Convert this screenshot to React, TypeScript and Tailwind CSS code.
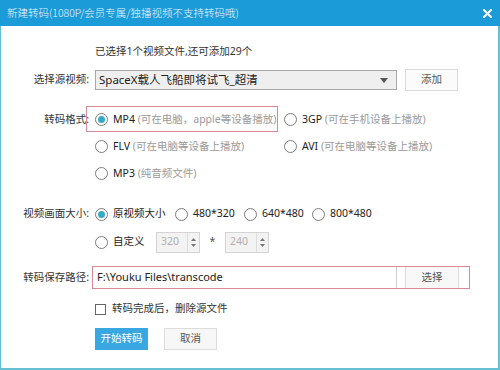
// App.tsx — 新建转码 dialog

const FONT = "font-['Noto_Sans','Noto_Sans_CJK_SC',sans-serif]";

// ── Radio ─────────────────────────────────────────────────────────────────────
function Radio({ checked }: { checked?: boolean }) {
  return (
    <span className="w-[13px] h-[13px] rounded-full border border-[#7d7d7d] bg-white flex items-center justify-center shrink-0">
      {checked && <span className="w-[7px] h-[7px] rounded-full bg-[#36a9c6]" />}
    </span>
  );
}

// ── RadioItem ─────────────────────────────────────────────────────────────────
interface RadioItemProps {
  label: string;
  note?: string;
  checked?: boolean;
}

function RadioItem({ label, note, checked }: RadioItemProps) {
  return (
    <div className="flex items-center gap-[5px] h-full">
      <Radio checked={checked} />
      <span className="text-[#222] whitespace-nowrap">
        {label}
        {note && <span className="text-[#9a9a9a]"> {note}</span>}
      </span>
    </div>
  );
}

// ── SpinBox ───────────────────────────────────────────────────────────────────
function SpinBox({ value }: { value: string }) {
  return (
    <div className="w-[44px] h-[21px] border border-[#d4d4d4] bg-[#f3f3f3] flex items-stretch">
      <div className="flex-1 flex items-center pl-[4px] text-[#b0b0b0]">{value}</div>
      <div className="w-[12px] border-l border-[#dcdcdc] flex flex-col items-center justify-center gap-[3px]">
        <svg width="5" height="3" viewBox="0 0 5 3"><path d="M2.5 0L5 3H0z" fill="#777" /></svg>
        <svg width="5" height="3" viewBox="0 0 5 3"><path d="M0 0h5L2.5 3z" fill="#777" /></svg>
      </div>
    </div>
  );
}

// ── Label ─────────────────────────────────────────────────────────────────────
function Label({ children, top }: { children?: React.ReactNode; top?: boolean }) {
  return (
    <div
      className={`w-[88px] shrink-0 flex justify-end text-[#333] whitespace-nowrap ${
        top ? "items-start" : "items-center"
      }`}
    >
      {children}
    </div>
  );
}

export default function App() {
  return (
    <div className={`w-[500px] h-[370px] bg-white flex flex-col text-[10.5px] ${FONT}`}>
      {/* title bar */}
      <div className="h-[26px] shrink-0 bg-[#1b9bd8] flex items-center justify-between pl-[7px] pr-[8px]">
        <span className="text-[10.5px] text-[#eaf6fc] font-['Noto_Sans_CJK_SC',sans-serif] font-light">
          新建转码(1080P/会员专属/独播视频不支持转码哦)
        </span>
        <svg width="9" height="9" viewBox="0 0 9 9">
          <path d="M1 1L8 8M8 1L1 8" stroke="#fff" strokeWidth="2" strokeLinecap="round" />
        </svg>
      </div>

      <div className="flex-1 flex flex-col border-l border-r-2 border-b-2 border-[#66c0d3]">
        {/* info */}
        <div className="flex mt-[18px] h-[16px]">
          <Label />
          <div className="ml-[6px] flex items-center text-[#333]">已选择1个视频文件,还可添加29个</div>
        </div>

        {/* source video */}
        <div className="flex mt-[9px] h-[22px]">
          <Label>选择源视频:</Label>
          <div className="ml-[6px] flex items-center gap-[8px]">
            <div className="w-[302px] h-[20px] border border-[#a8a8a8] bg-[#efefef] flex items-center justify-between pl-[3px] pr-[8px]">
              <span className="text-[11.5px] text-[#222]">SpaceX载人飞船即将试飞_超清</span>
              <svg width="8" height="5" viewBox="0 0 8 5"><path d="M0 0h8L4 5z" fill="#555" /></svg>
            </div>
            <button className="w-[53px] h-[22px] border border-[#dadada] bg-[#fbfbfb] text-[#555]">添加</button>
          </div>
        </div>

        {/* format */}
        <div className="flex mt-[15px]">
          <Label top>
            <span className="h-[27px] flex items-center">转码格式:</span>
          </Label>
          <div className="ml-[6px] grid grid-cols-[189px_auto] auto-rows-[27px]">
            <div className="relative">
              <RadioItem checked label="MP4" note="(可在电脑，apple等设备播放)" />
              <span className="absolute -left-[9px] top-0 w-[192px] h-[26px] border border-[#d98a94]" />
            </div>
            <RadioItem label="3GP" note="(可在手机设备上播放)" />
            <RadioItem label="FLV" note=" (可在电脑等设备上播放)" />
            <RadioItem label="AVI" note=" (可在电脑等设备上播放)" />
            <RadioItem label="MP3" note="(纯音频文件)" />
          </div>
        </div>

        {/* size */}
        <div className="flex mt-[13px]">
          <Label top>
            <span className="h-[28px] flex items-center">视频画面大小:</span>
          </Label>
          <div className="ml-[6px] flex flex-col">
            <div className="h-[28px] grid grid-cols-[80px_69px_68px_auto]">
              <RadioItem checked label="原视频大小" />
              <RadioItem label="480*320" />
              <RadioItem label="640*480" />
              <RadioItem label="800*480" />
            </div>
            <div className="h-[28px] flex items-center">
              <div className="w-[61px]">
                <RadioItem label="自定义" />
              </div>
              <SpinBox value="320" />
              <span className="w-[25px] text-center text-[#555]">*</span>
              <SpinBox value="240" />
            </div>
          </div>
        </div>

        {/* save path */}
        <div className="flex mt-[10px] h-[23px]">
          <Label>转码保存路径:</Label>
          <div className="ml-[3px] w-[378px] border border-[#d98a94] flex items-stretch">
            <div className="w-[304px] border-r border-[#cfcfcf] flex items-center pl-[4px] text-[11px] text-[#222]">
              F:\Youku Files\transcode
            </div>
            <button className="ml-[8px] w-[54px] border-x border-[#dcdcdc] bg-[#f8f8f8] text-[#555]">选择</button>
          </div>
        </div>

        {/* delete source */}
        <div className="flex mt-[12px] h-[16px]">
          <Label />
          <div className="ml-[6px] flex items-center gap-[6px] text-[#333]">
            <span className="w-[11px] h-[11px] border border-[#666] bg-white" />
            转码完成后，删除源文件
          </div>
        </div>

        {/* actions */}
        <div className="flex mt-[11px] h-[22px]">
          <Label />
          <div className="ml-[6px] flex gap-[16px]">
            <button className="w-[53px] h-[22px] bg-[#3aa8e0] text-white">开始转码</button>
            <button className="w-[53px] h-[22px] border border-[#dcdcdc] bg-[#f7f7f7] text-[#555]">取消</button>
          </div>
        </div>
      </div>
    </div>
  );
}
